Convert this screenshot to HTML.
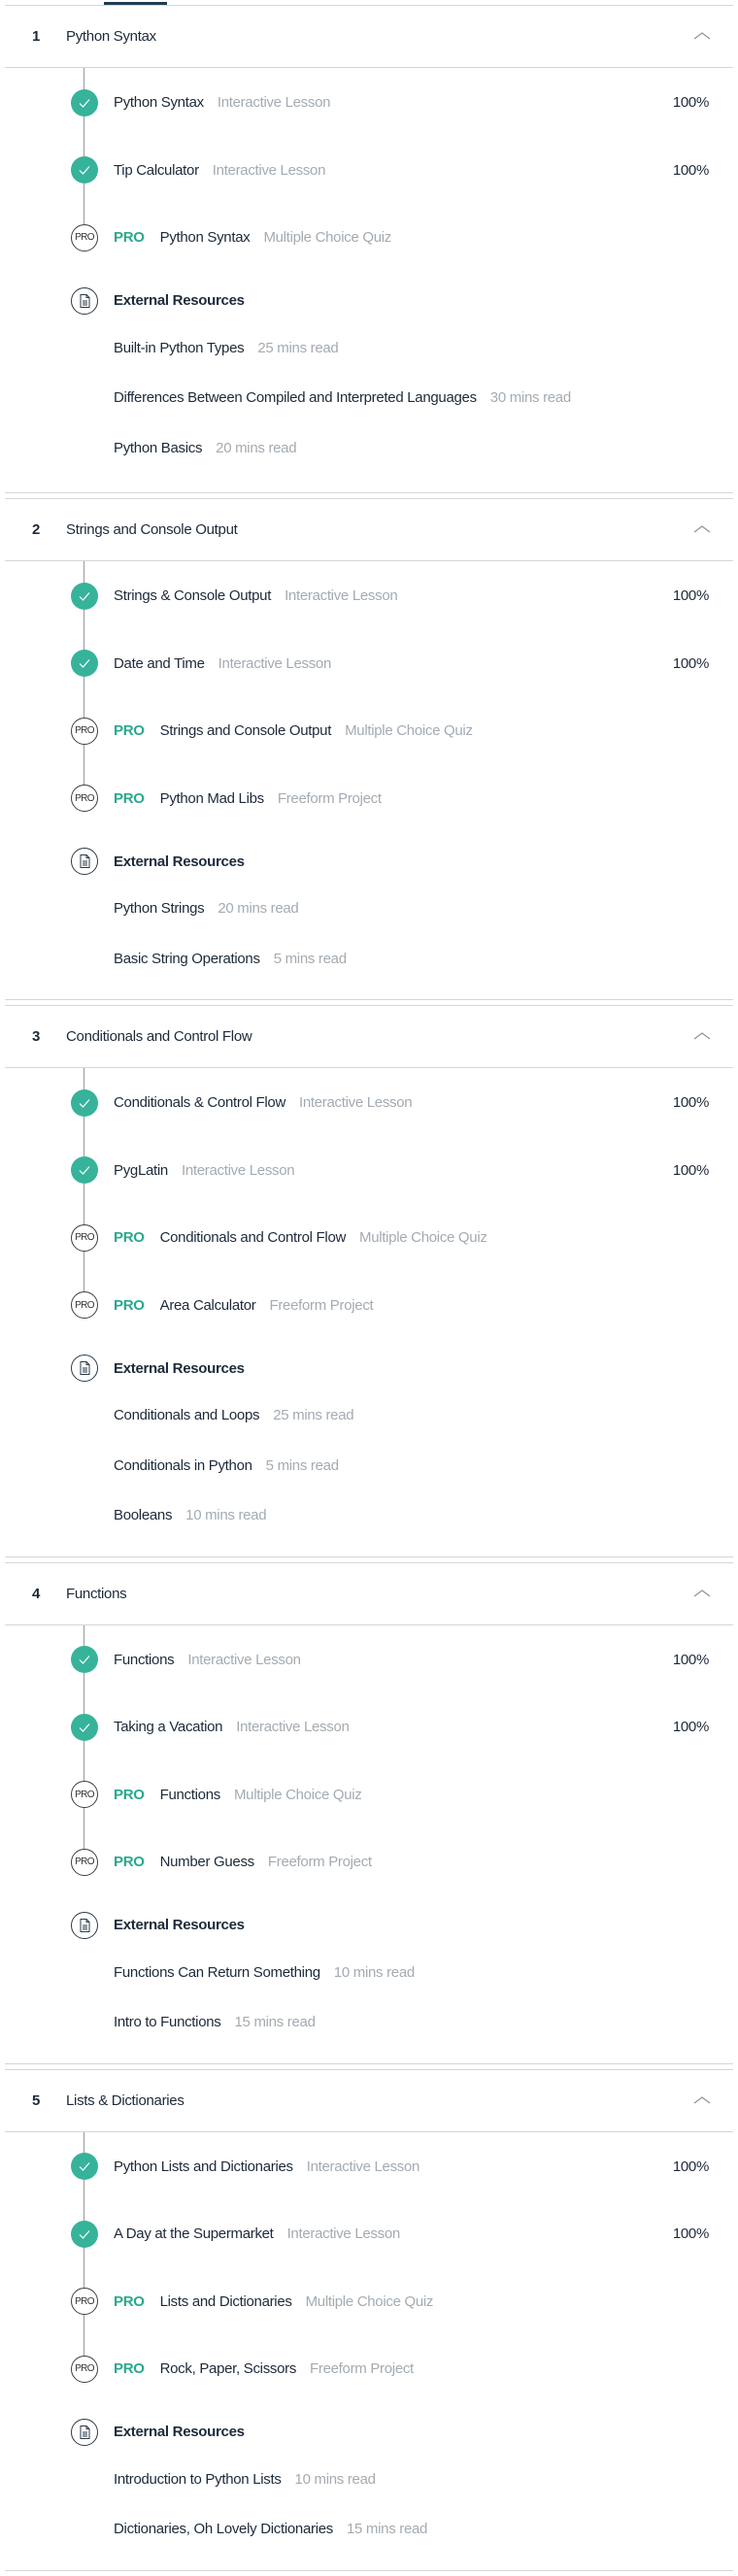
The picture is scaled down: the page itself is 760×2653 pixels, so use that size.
<!DOCTYPE html>
<html><head><meta charset="utf-8"><style>
*{box-sizing:border-box;margin:0;padding:0}
body{width:760px;height:2652px;background:#fff;font-family:"Liberation Sans",Arial,sans-serif;font-size:15px;letter-spacing:-0.3px;color:#1d2a3a;position:relative;overflow:hidden}
.tab{position:absolute;left:107px;top:2px;width:65px;height:4px;background:#1f3d54}
.wrap{position:absolute;left:5px;top:5px;width:750px}
.sec{border-top:1px solid #d6d6d6;border-bottom:1px solid #d6d6d6;margin-bottom:5px}
.hd{height:64px;border-bottom:1px solid #d6d6d6;display:flex;align-items:center;position:relative}
.num{position:absolute;left:28px;font-weight:bold;color:#1d2a3a}
.ttl{position:absolute;left:63px}
.chev{position:absolute;left:709px;top:26px}
.items{position:relative;padding-top:1px}
.vl{position:absolute;left:81px;top:0;width:1px;background:#9a9a9a}
.row{height:69.5px;display:flex;align-items:center;position:relative}
.ic{position:absolute;left:68px;width:28px;height:28px;border-radius:50%;top:50%;margin-top:-14px}
.ok{background:#36b39a}
.pro{background:#fff;border:1px solid #3a3f48;font-size:10px;letter-spacing:-0.6px;color:#333;display:flex;align-items:center;justify-content:center}
.doc{background:#fff;border:1px solid #2a3a4a}
.tx{position:absolute;left:112px;white-space:nowrap}
.g{color:#a3abb2;margin-left:14px}
.p{color:#2aa88e;font-weight:bold;margin-right:16px}
.pc{position:absolute;right:25px}
.er{height:46px;margin-top:7px}
.er .tx{font-weight:bold;color:#1c2b3b}
.ln{height:51.5px;display:flex;align-items:center;position:relative}
.pb{height:16px}
.pb1{height:20px}
</style></head><body>
<div class="tab"></div>
<div class="wrap">

<div class="sec">
<div class="hd"><span class="num">1</span><span class="ttl">Python Syntax</span><svg class="chev" width="18" height="10" viewBox="0 0 18 10"><path d="M1 8 L9 2 L17 8" fill="none" stroke="#8a95a0" stroke-width="1.3"/></svg></div>
<div class="items"><div class="vl" style="height:174px"></div>
<div class="row"><div class="ic ok"><svg width="28" height="28"><path d="M9 14.5 L12.5 18 L19 10.5" fill="none" stroke="#fff" stroke-width="1.2"/></svg></div><span class="tx">Python Syntax<span class="g">Interactive Lesson</span></span><span class="pc">100%</span></div>
<div class="row"><div class="ic ok"><svg width="28" height="28"><path d="M9 14.5 L12.5 18 L19 10.5" fill="none" stroke="#fff" stroke-width="1.2"/></svg></div><span class="tx">Tip Calculator<span class="g">Interactive Lesson</span></span><span class="pc">100%</span></div>
<div class="row"><div class="ic pro">PRO</div><span class="tx"><span class="p">PRO</span>Python Syntax<span class="g">Multiple Choice Quiz</span></span></div>
<div class="row er"><div class="ic doc"><svg width="26" height="26"><path d="M9 6.5 H15 L18 9.5 V19.5 H9 Z M15 6.5 V9.5 H18 M11 13 H16 M11 15 H16 M11 17 H16" fill="none" stroke="#2a3a4a" stroke-width="1"/></svg></div><span class="tx">External Resources</span></div>
<div class="ln"><span class="tx">Built-in Python Types<span class="g">25 mins read</span></span></div>
<div class="ln"><span class="tx">Differences Between Compiled and Interpreted Languages<span class="g">30 mins read</span></span></div>
<div class="ln"><span class="tx">Python Basics<span class="g">20 mins read</span></span></div>
<div class="pb1"></div></div></div>

<div class="sec">
<div class="hd"><span class="num">2</span><span class="ttl">Strings and Console Output</span><svg class="chev" width="18" height="10" viewBox="0 0 18 10"><path d="M1 8 L9 2 L17 8" fill="none" stroke="#8a95a0" stroke-width="1.3"/></svg></div>
<div class="items"><div class="vl" style="height:244px"></div>
<div class="row"><div class="ic ok"><svg width="28" height="28"><path d="M9 14.5 L12.5 18 L19 10.5" fill="none" stroke="#fff" stroke-width="1.2"/></svg></div><span class="tx">Strings &amp; Console Output<span class="g">Interactive Lesson</span></span><span class="pc">100%</span></div>
<div class="row"><div class="ic ok"><svg width="28" height="28"><path d="M9 14.5 L12.5 18 L19 10.5" fill="none" stroke="#fff" stroke-width="1.2"/></svg></div><span class="tx">Date and Time<span class="g">Interactive Lesson</span></span><span class="pc">100%</span></div>
<div class="row"><div class="ic pro">PRO</div><span class="tx"><span class="p">PRO</span>Strings and Console Output<span class="g">Multiple Choice Quiz</span></span></div>
<div class="row"><div class="ic pro">PRO</div><span class="tx"><span class="p">PRO</span>Python Mad Libs<span class="g">Freeform Project</span></span></div>
<div class="row er"><div class="ic doc"><svg width="26" height="26"><path d="M9 6.5 H15 L18 9.5 V19.5 H9 Z M15 6.5 V9.5 H18 M11 13 H16 M11 15 H16 M11 17 H16" fill="none" stroke="#2a3a4a" stroke-width="1"/></svg></div><span class="tx">External Resources</span></div>
<div class="ln"><span class="tx">Python Strings<span class="g">20 mins read</span></span></div>
<div class="ln"><span class="tx">Basic String Operations<span class="g">5 mins read</span></span></div>
<div class="pb"></div></div></div>

<div class="sec">
<div class="hd"><span class="num">3</span><span class="ttl">Conditionals and Control Flow</span><svg class="chev" width="18" height="10" viewBox="0 0 18 10"><path d="M1 8 L9 2 L17 8" fill="none" stroke="#8a95a0" stroke-width="1.3"/></svg></div>
<div class="items"><div class="vl" style="height:244px"></div>
<div class="row"><div class="ic ok"><svg width="28" height="28"><path d="M9 14.5 L12.5 18 L19 10.5" fill="none" stroke="#fff" stroke-width="1.2"/></svg></div><span class="tx">Conditionals &amp; Control Flow<span class="g">Interactive Lesson</span></span><span class="pc">100%</span></div>
<div class="row"><div class="ic ok"><svg width="28" height="28"><path d="M9 14.5 L12.5 18 L19 10.5" fill="none" stroke="#fff" stroke-width="1.2"/></svg></div><span class="tx">PygLatin<span class="g">Interactive Lesson</span></span><span class="pc">100%</span></div>
<div class="row"><div class="ic pro">PRO</div><span class="tx"><span class="p">PRO</span>Conditionals and Control Flow<span class="g">Multiple Choice Quiz</span></span></div>
<div class="row"><div class="ic pro">PRO</div><span class="tx"><span class="p">PRO</span>Area Calculator<span class="g">Freeform Project</span></span></div>
<div class="row er"><div class="ic doc"><svg width="26" height="26"><path d="M9 6.5 H15 L18 9.5 V19.5 H9 Z M15 6.5 V9.5 H18 M11 13 H16 M11 15 H16 M11 17 H16" fill="none" stroke="#2a3a4a" stroke-width="1"/></svg></div><span class="tx">External Resources</span></div>
<div class="ln"><span class="tx">Conditionals and Loops<span class="g">25 mins read</span></span></div>
<div class="ln"><span class="tx">Conditionals in Python<span class="g">5 mins read</span></span></div>
<div class="ln"><span class="tx">Booleans<span class="g">10 mins read</span></span></div>
<div class="pb"></div></div></div>

<div class="sec">
<div class="hd"><span class="num">4</span><span class="ttl">Functions</span><svg class="chev" width="18" height="10" viewBox="0 0 18 10"><path d="M1 8 L9 2 L17 8" fill="none" stroke="#8a95a0" stroke-width="1.3"/></svg></div>
<div class="items"><div class="vl" style="height:244px"></div>
<div class="row"><div class="ic ok"><svg width="28" height="28"><path d="M9 14.5 L12.5 18 L19 10.5" fill="none" stroke="#fff" stroke-width="1.2"/></svg></div><span class="tx">Functions<span class="g">Interactive Lesson</span></span><span class="pc">100%</span></div>
<div class="row"><div class="ic ok"><svg width="28" height="28"><path d="M9 14.5 L12.5 18 L19 10.5" fill="none" stroke="#fff" stroke-width="1.2"/></svg></div><span class="tx">Taking a Vacation<span class="g">Interactive Lesson</span></span><span class="pc">100%</span></div>
<div class="row"><div class="ic pro">PRO</div><span class="tx"><span class="p">PRO</span>Functions<span class="g">Multiple Choice Quiz</span></span></div>
<div class="row"><div class="ic pro">PRO</div><span class="tx"><span class="p">PRO</span>Number Guess<span class="g">Freeform Project</span></span></div>
<div class="row er"><div class="ic doc"><svg width="26" height="26"><path d="M9 6.5 H15 L18 9.5 V19.5 H9 Z M15 6.5 V9.5 H18 M11 13 H16 M11 15 H16 M11 17 H16" fill="none" stroke="#2a3a4a" stroke-width="1"/></svg></div><span class="tx">External Resources</span></div>
<div class="ln"><span class="tx">Functions Can Return Something<span class="g">10 mins read</span></span></div>
<div class="ln"><span class="tx">Intro to Functions<span class="g">15 mins read</span></span></div>
<div class="pb"></div></div></div>

<div class="sec">
<div class="hd"><span class="num">5</span><span class="ttl">Lists &amp; Dictionaries</span><svg class="chev" width="18" height="10" viewBox="0 0 18 10"><path d="M1 8 L9 2 L17 8" fill="none" stroke="#8a95a0" stroke-width="1.3"/></svg></div>
<div class="items"><div class="vl" style="height:244px"></div>
<div class="row"><div class="ic ok"><svg width="28" height="28"><path d="M9 14.5 L12.5 18 L19 10.5" fill="none" stroke="#fff" stroke-width="1.2"/></svg></div><span class="tx">Python Lists and Dictionaries<span class="g">Interactive Lesson</span></span><span class="pc">100%</span></div>
<div class="row"><div class="ic ok"><svg width="28" height="28"><path d="M9 14.5 L12.5 18 L19 10.5" fill="none" stroke="#fff" stroke-width="1.2"/></svg></div><span class="tx">A Day at the Supermarket<span class="g">Interactive Lesson</span></span><span class="pc">100%</span></div>
<div class="row"><div class="ic pro">PRO</div><span class="tx"><span class="p">PRO</span>Lists and Dictionaries<span class="g">Multiple Choice Quiz</span></span></div>
<div class="row"><div class="ic pro">PRO</div><span class="tx"><span class="p">PRO</span>Rock, Paper, Scissors<span class="g">Freeform Project</span></span></div>
<div class="row er"><div class="ic doc"><svg width="26" height="26"><path d="M9 6.5 H15 L18 9.5 V19.5 H9 Z M15 6.5 V9.5 H18 M11 13 H16 M11 15 H16 M11 17 H16" fill="none" stroke="#2a3a4a" stroke-width="1"/></svg></div><span class="tx">External Resources</span></div>
<div class="ln"><span class="tx">Introduction to Python Lists<span class="g">10 mins read</span></span></div>
<div class="ln"><span class="tx">Dictionaries, Oh Lovely Dictionaries<span class="g">15 mins read</span></span></div>
<div class="pb"></div></div></div>

</div>
</body></html>
